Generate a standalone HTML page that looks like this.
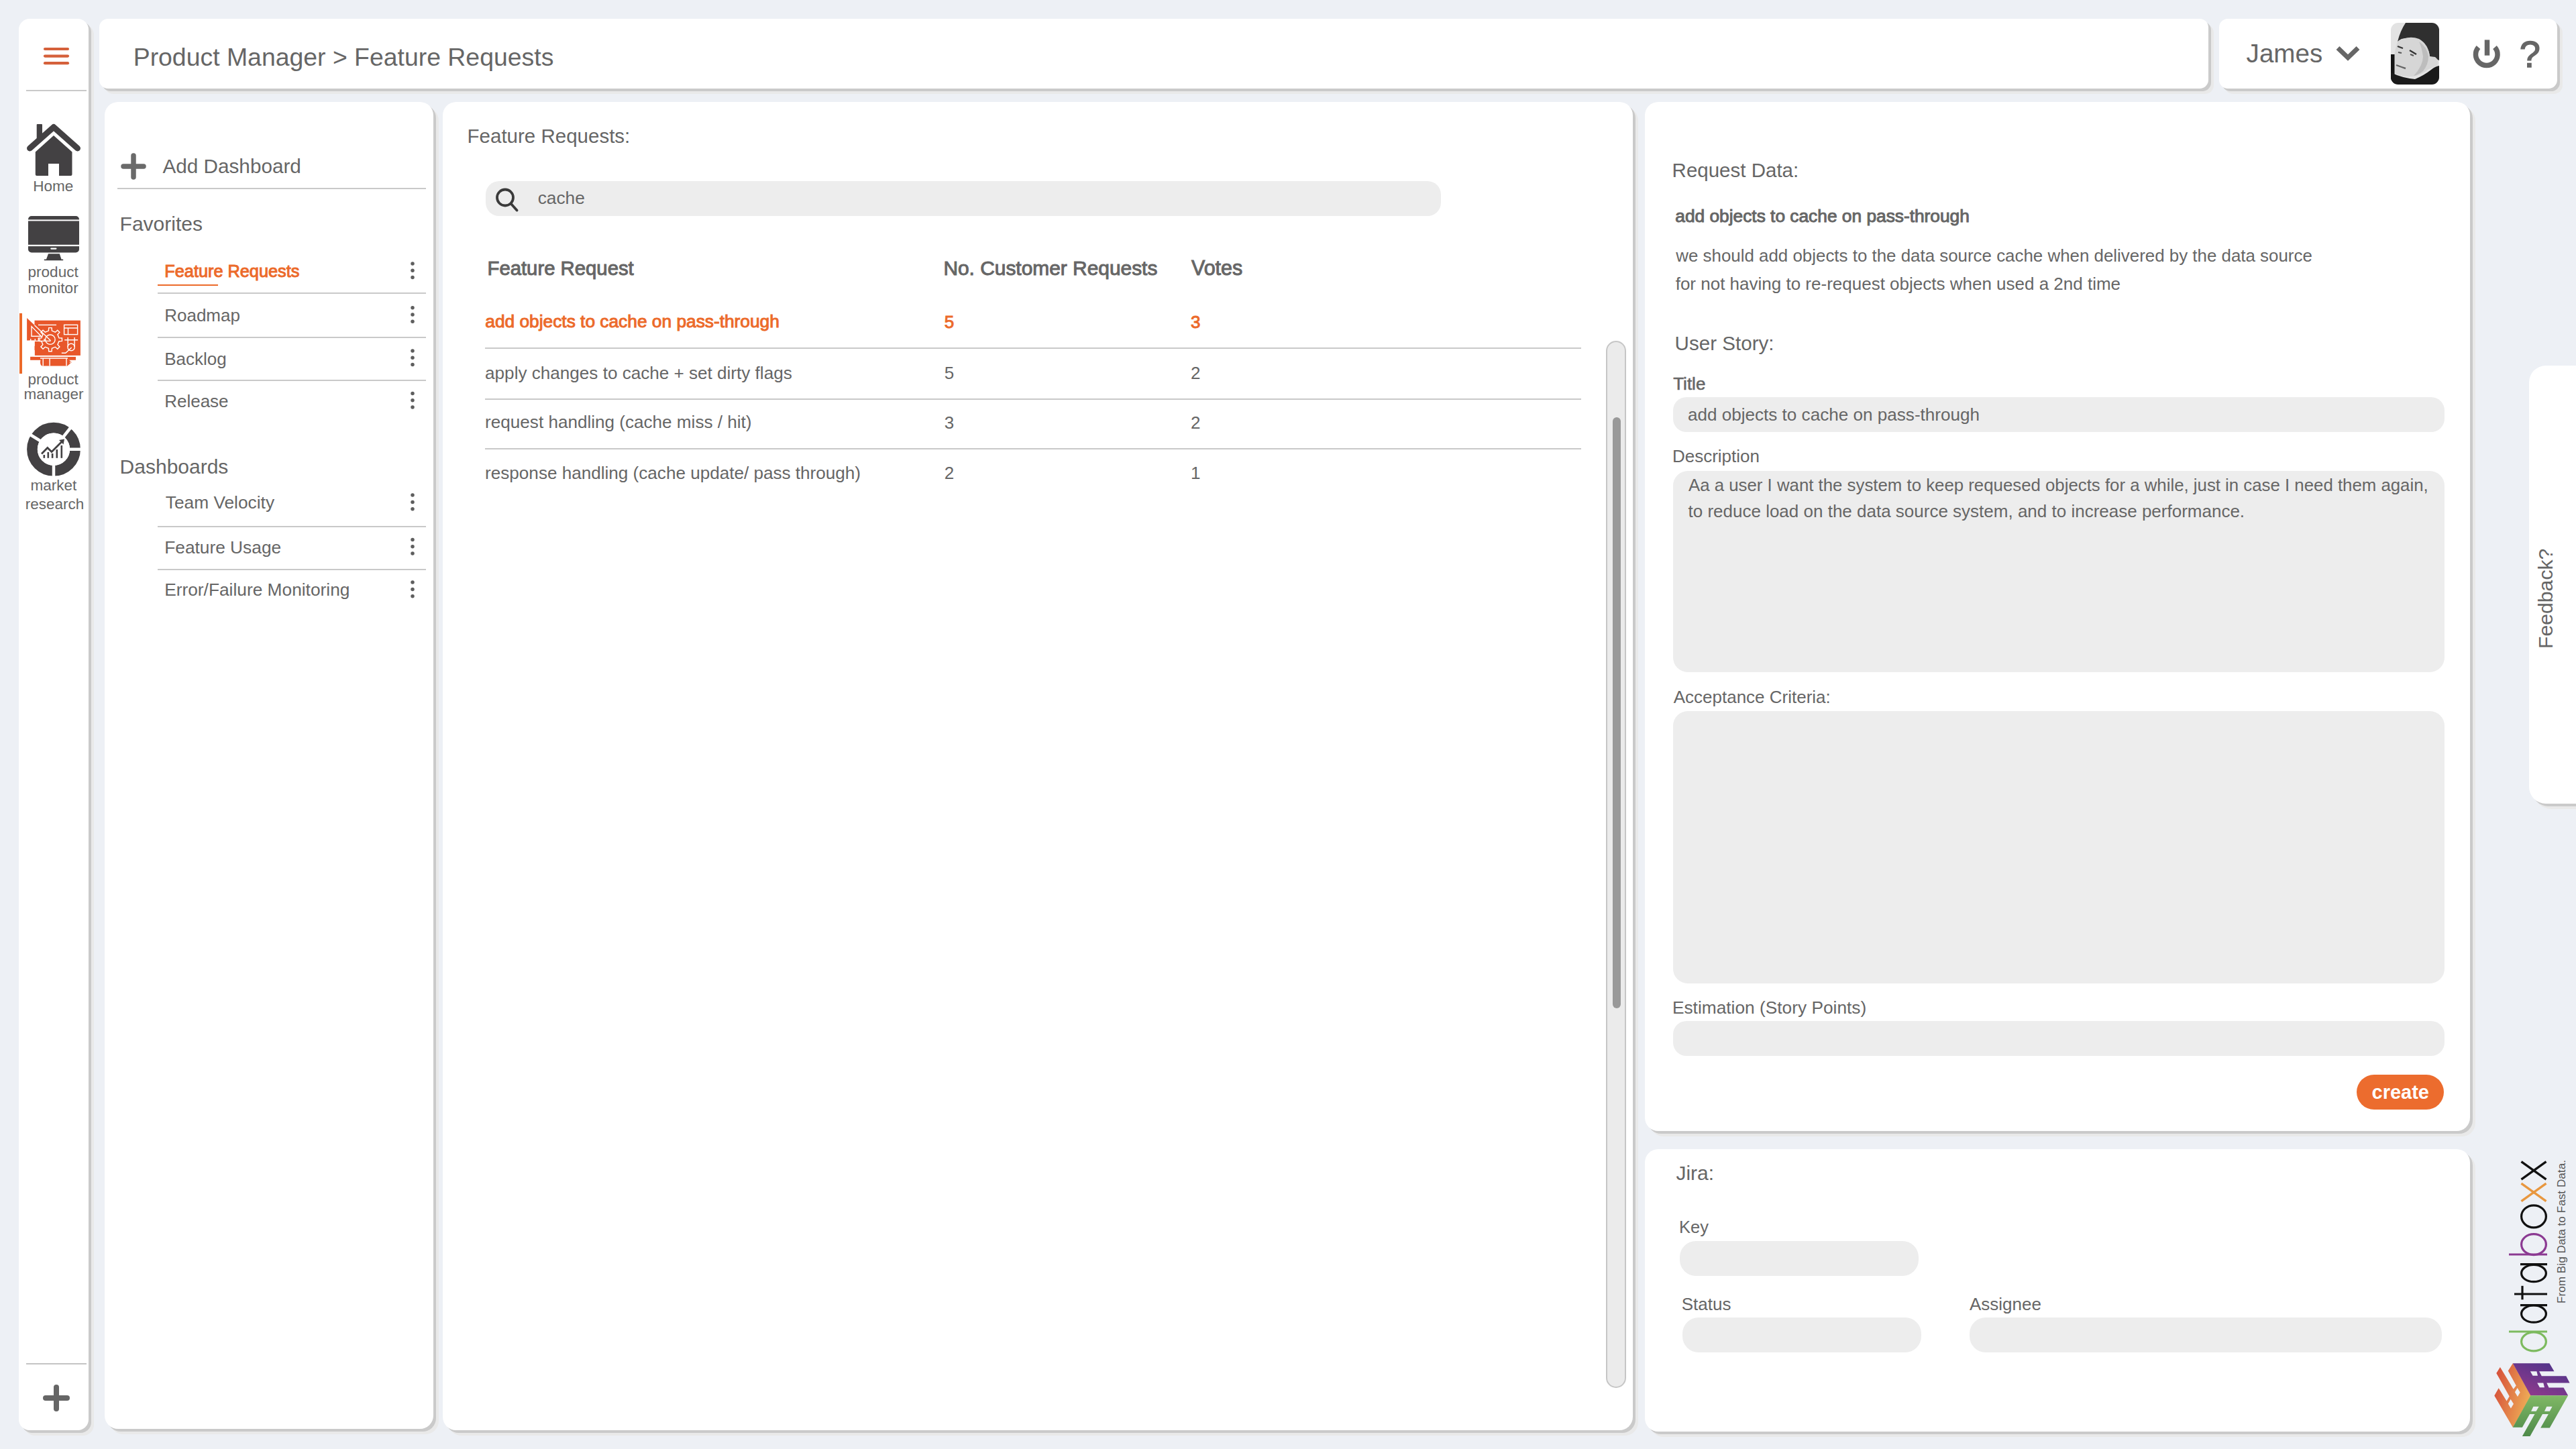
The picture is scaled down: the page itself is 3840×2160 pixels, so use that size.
<!DOCTYPE html>
<html><head><meta charset="utf-8"><style>
html,body{margin:0;padding:0;}
body{width:3840px;height:2160px;background:#edf0f5;position:relative;overflow:hidden;font-family:"Liberation Sans", sans-serif;}
.t{position:absolute;white-space:nowrap;line-height:1;font-family:"Liberation Sans", sans-serif;}
.r{position:absolute;}
svg{position:absolute;left:0;top:0;}
</style></head><body>
<div class="r" style="left:28px;top:28px;width:104px;height:2104px;background:#fff;border-radius:16px;box-shadow:4px 4px 0 #cacaca,8px 8px 0 #e9e9e9;"></div>
<div class="r" style="left:148px;top:28px;width:3144px;height:104px;background:#fff;border-radius:13px;box-shadow:4px 4px 0 #cacaca,8px 8px 0 #e9e9e9;"></div>
<div class="r" style="left:3308px;top:28px;width:504px;height:104px;background:#fff;border-radius:13px;box-shadow:4px 4px 0 #cacaca,8px 8px 0 #e9e9e9;"></div>
<div class="r" style="left:156px;top:152px;width:490px;height:1978px;background:#fff;border-radius:20px;box-shadow:4px 4px 0 #cacaca,8px 8px 0 #e9e9e9;"></div>
<div class="r" style="left:660px;top:152px;width:1774px;height:1980px;background:#fff;border-radius:20px;box-shadow:4px 4px 0 #cacaca,8px 8px 0 #e9e9e9;"></div>
<div class="r" style="left:2452px;top:152px;width:1230px;height:1534px;background:#fff;border-radius:20px;box-shadow:4px 4px 0 #cacaca,8px 8px 0 #e9e9e9;"></div>
<div class="r" style="left:2452px;top:1713px;width:1230px;height:421px;background:#fff;border-radius:20px;box-shadow:4px 4px 0 #cacaca,8px 8px 0 #e9e9e9;"></div>
<div class="r" style="left:3770px;top:545px;width:100px;height:653px;background:#fff;border-radius:25px;box-shadow:4px 4px 0 #cacaca,8px 8px 0 #e9e9e9;"></div>
<div class="r" style="left:39px;top:134px;width:90px;height:2px;background:#c9c9c9;border-radius:0px;"></div>
<div class="r" style="left:39px;top:2032px;width:90px;height:2px;background:#c4c4c4;border-radius:0px;"></div>
<div class="r" style="left:29px;top:467px;width:4px;height:90px;background:#ec6a2a;border-radius:0px;"></div>
<div class="t" style="left:49.2px;top:266.7px;font-size:22.5px;color:#666;">Home</div>
<div class="t" style="left:41.6px;top:394.7px;font-size:22.5px;color:#666;">product</div>
<div class="t" style="left:41.6px;top:418.8px;font-size:22.5px;color:#666;">monitor</div>
<div class="t" style="left:41.6px;top:554.7px;font-size:22.5px;color:#666;">product</div>
<div class="t" style="left:35.6px;top:576.7px;font-size:22.5px;color:#666;">manager</div>
<div class="t" style="left:45.6px;top:712.7px;font-size:22.5px;color:#666;">market</div>
<div class="t" style="left:37.8px;top:740.7px;font-size:22.5px;color:#666;">research</div>
<div class="t" style="left:198.7px;top:66.7px;font-size:37.4px;color:#666;">Product Manager &gt; Feature Requests</div>
<div class="t" style="left:3348.6px;top:60.5px;font-size:38.6px;color:#666;">James</div>
<div class="t" style="left:242.5px;top:233.3px;font-size:29.7px;color:#666;">Add Dashboard</div>
<div class="r" style="left:175px;top:280px;width:460px;height:2px;background:#c9c9c9;border-radius:0px;"></div>
<div class="t" style="left:178.6px;top:318.9px;font-size:30px;color:#666;">Favorites</div>
<div class="t" style="left:245.3px;top:391.9px;font-size:25.3px;color:#ec6a2a;-webkit-text-stroke:1.0px #ec6a2a;">Feature Requests</div>
<div class="r" style="left:235px;top:424px;width:90px;height:2px;background:#ec6a2a;border-radius:0px;"></div>
<div class="r" style="left:235px;top:436px;width:400px;height:2px;background:#c9c9c9;border-radius:0px;"></div>
<div class="r" style="left:235px;top:502px;width:400px;height:2px;background:#c9c9c9;border-radius:0px;"></div>
<div class="r" style="left:235px;top:566px;width:400px;height:2px;background:#c9c9c9;border-radius:0px;"></div>
<div class="t" style="left:245.2px;top:457.3px;font-size:26px;color:#666;">Roadmap</div>
<div class="t" style="left:245.2px;top:521.5px;font-size:26px;color:#666;">Backlog</div>
<div class="t" style="left:245.2px;top:585.0px;font-size:26px;color:#666;">Release</div>
<div class="t" style="left:178.6px;top:680.6px;font-size:30px;color:#666;">Dashboards</div>
<div class="t" style="left:246.8px;top:736.4px;font-size:26.3px;color:#666;">Team Velocity</div>
<div class="r" style="left:235px;top:784px;width:400px;height:2px;background:#c9c9c9;border-radius:0px;"></div>
<div class="t" style="left:245.2px;top:802.7px;font-size:26.3px;color:#666;">Feature Usage</div>
<div class="r" style="left:235px;top:848px;width:400px;height:2px;background:#c9c9c9;border-radius:0px;"></div>
<div class="t" style="left:245.2px;top:866.4px;font-size:26.3px;color:#666;">Error/Failure Monitoring</div>
<div class="t" style="left:696.6px;top:187.5px;font-size:29.5px;color:#666;">Feature Requests:</div>
<div class="r" style="left:724px;top:270px;width:1424px;height:52px;background:#ededed;border-radius:20px;"></div>
<div class="t" style="left:801.7px;top:282.2px;font-size:26.3px;color:#666;">cache</div>
<div class="t" style="left:726.5px;top:385.0px;font-size:29.3px;color:#666;-webkit-text-stroke:1.0px #666;">Feature Request</div>
<div class="t" style="left:1406.4px;top:384.5px;font-size:29.9px;color:#666;-webkit-text-stroke:1.0px #666;">No. Customer Requests</div>
<div class="t" style="left:1776.0px;top:384.0px;font-size:30.5px;color:#666;-webkit-text-stroke:1.0px #666;">Votes</div>
<div class="t" style="left:723.3px;top:466.2px;font-size:26.3px;color:#ec6a2a;-webkit-text-stroke:1.0px #ec6a2a;">add objects to cache on pass-through</div>
<div class="t" style="left:1407.8px;top:466.5px;font-size:26px;color:#ec6a2a;-webkit-text-stroke:1.0px #ec6a2a;">5</div>
<div class="t" style="left:1775.0px;top:466.5px;font-size:26px;color:#ec6a2a;-webkit-text-stroke:1.0px #ec6a2a;">3</div>
<div class="t" style="left:723.1px;top:542.5px;font-size:26.1px;color:#666;">apply changes to cache + set dirty flags</div>
<div class="t" style="left:1407.8px;top:542.6px;font-size:26px;color:#666;">5</div>
<div class="t" style="left:1775.0px;top:542.6px;font-size:26px;color:#666;">2</div>
<div class="t" style="left:723.1px;top:616.4px;font-size:26.1px;color:#666;">request handling (cache miss / hit)</div>
<div class="t" style="left:1407.8px;top:616.5px;font-size:26px;color:#666;">3</div>
<div class="t" style="left:1775.0px;top:616.5px;font-size:26px;color:#666;">2</div>
<div class="t" style="left:723.1px;top:691.9px;font-size:26.1px;color:#666;">response handling (cache update/ pass through)</div>
<div class="t" style="left:1407.8px;top:692.0px;font-size:26px;color:#666;">2</div>
<div class="t" style="left:1775.0px;top:692.0px;font-size:26px;color:#666;">1</div>
<div class="r" style="left:723px;top:518px;width:1634px;height:2px;background:#c9c9c9;border-radius:0px;"></div>
<div class="r" style="left:723px;top:594px;width:1634px;height:2px;background:#c9c9c9;border-radius:0px;"></div>
<div class="r" style="left:723px;top:668px;width:1634px;height:2px;background:#c9c9c9;border-radius:0px;"></div>
<div class="r" style="left:2394px;top:508px;width:30px;height:1561px;background:#ebebeb;border-radius:15px;border:2px solid #c6c6c6;box-sizing:border-box;"></div>
<div class="r" style="left:2404px;top:622px;width:12px;height:881px;background:#999999;border-radius:6px;"></div>
<div class="t" style="left:2492.6px;top:239.2px;font-size:29.5px;color:#666;">Request Data:</div>
<div class="t" style="left:2497.3px;top:309.0px;font-size:26.3px;color:#666;-webkit-text-stroke:1.0px #666;">add objects to cache on pass-through</div>
<div class="t" style="left:2498.3px;top:368.5px;font-size:25.9px;color:#666;">we should add objects to the data source cache when delivered by the data source</div>
<div class="t" style="left:2497.7px;top:410.4px;font-size:26px;color:#666;">for not having to re-request objects when used a 2nd time</div>
<div class="t" style="left:2496.6px;top:497.3px;font-size:29.6px;color:#666;">User Story:</div>
<div class="t" style="left:2494.2px;top:558.9px;font-size:26px;color:#666;-webkit-text-stroke:0.6px #666;">Title</div>
<div class="r" style="left:2494px;top:592px;width:1150px;height:52px;background:#ededed;border-radius:20px;"></div>
<div class="t" style="left:2515.9px;top:604.7px;font-size:26.1px;color:#666;">add objects to cache on pass-through</div>
<div class="t" style="left:2492.9px;top:667.0px;font-size:26px;color:#666;">Description</div>
<div class="r" style="left:2494px;top:702px;width:1150px;height:300px;background:#ededed;border-radius:22px;"></div>
<div class="t" style="left:2517.0px;top:710.5px;font-size:25.8px;color:#666;">Aa a user I want the system to keep requesed objects for a while, just in case I need them again,</div>
<div class="t" style="left:2516.5px;top:748.5px;font-size:26px;color:#666;">to reduce load on the data source system, and to increase performance.</div>
<div class="t" style="left:2494.7px;top:1025.5px;font-size:26px;color:#666;">Acceptance Criteria:</div>
<div class="r" style="left:2494px;top:1060px;width:1150px;height:406px;background:#ededed;border-radius:22px;"></div>
<div class="t" style="left:2492.9px;top:1488.5px;font-size:26.3px;color:#666;">Estimation (Story Points)</div>
<div class="r" style="left:2494px;top:1522px;width:1150px;height:52px;background:#ededed;border-radius:20px;"></div>
<div class="r" style="left:3513px;top:1602px;width:130px;height:52px;background:#ec6c2e;border-radius:26px;"></div>
<div class="t" style="left:3535.5px;top:1613.7px;font-size:29px;color:#ffffff;font-weight:700;">create</div>
<div class="t" style="left:2498.4px;top:1734.0px;font-size:30px;color:#666;">Jira:</div>
<div class="t" style="left:2503.0px;top:1817.4px;font-size:25.5px;color:#666;">Key</div>
<div class="r" style="left:2504px;top:1850px;width:356px;height:52px;background:#ededed;border-radius:24px;"></div>
<div class="t" style="left:2506.7px;top:1931.0px;font-size:26px;color:#666;">Status</div>
<div class="r" style="left:2508px;top:1964px;width:356px;height:52px;background:#ededed;border-radius:24px;"></div>
<div class="t" style="left:2936.0px;top:1931.0px;font-size:26px;color:#666;">Assignee</div>
<div class="r" style="left:2936px;top:1964px;width:704px;height:52px;background:#ededed;border-radius:24px;"></div>
<div class="t" style="left:3755.8px;top:53.2px;font-size:56px;color:#666;-webkit-text-stroke:1.4px #666;">?</div>
<div class="t" style="left:3824.5px;top:1943px;font-size:17.2px;line-height:17.2px;color:#555;transform-origin:0 0;transform:rotate(-90deg) translateY(-14.6px);">From Big Data to Fast Data.</div>
<div class="t" style="left:3780px;top:966.6px;font-size:30.2px;line-height:30.2px;color:#666;transform-origin:0 0;transform:rotate(-90deg);">Feedback?</div>
<svg width="3840" height="2160" viewBox="0 0 3840 2160">
<defs>
<linearGradient id="gOr" x1="0" y1="0.3" x2="1" y2="0.7"><stop offset="0" stop-color="#d6503a"/><stop offset="1" stop-color="#f0b458"/></linearGradient>
<linearGradient id="gPu" x1="0.3" y1="1" x2="1" y2="0"><stop offset="0" stop-color="#8f3a8c"/><stop offset="1" stop-color="#47338a"/></linearGradient>
<linearGradient id="gGr" x1="0" y1="0" x2="0" y2="1"><stop offset="0" stop-color="#80b865"/><stop offset="1" stop-color="#4e8a4a"/></linearGradient>
<clipPath id="photoClip"><rect x="3564" y="34" width="72" height="92" rx="11"/></clipPath>
</defs>
<!-- hamburger -->
<g stroke="#d5603a" stroke-width="4.2" stroke-linecap="round">
<line x1="67" y1="73" x2="101" y2="73"/><line x1="67" y1="83.6" x2="101" y2="83.6"/><line x1="67" y1="94.2" x2="101" y2="94.2"/>
</g>
<!-- home -->
<g fill="#434143">
<path d="M44.5,221 L80,189.5 L115.5,221" fill="none" stroke="#434143" stroke-width="9" stroke-linecap="round" stroke-linejoin="round"/>
<rect x="54.7" y="185" width="8.3" height="22" rx="1"/>
<path d="M80,202 L107.5,226.5 L107.5,260 Q107.5,262 105.5,262 L88,262 L88,244 L72,244 L72,262 L54.8,262 Q52.8,262 52.8,260 L52.8,226.5 Z"/>
</g>
<!-- monitor -->
<g fill="#434143">
<rect x="42" y="322" width="76" height="54.5" rx="5"/>
<path d="M72,378.3 L88.8,378.3 L91.5,386.4 L94,386.4 Q95,388.3 93.5,388.3 L66.5,388.3 Q65,388.3 66,386.4 L69,386.4 Z"/>
</g>
<g fill="#fff">
<rect x="42" y="327.4" width="76" height="2"/>
<rect x="42" y="364.8" width="76" height="2.3"/>
<rect x="75.2" y="369.5" width="9.3" height="2.2" rx="1.1"/>
</g>
<!-- product manager icon -->
<g fill="#e8572a">
<rect x="51.5" y="477.7" width="68.4" height="52.2"/>
<rect x="45.1" y="531.8" width="67.9" height="5"/>
<path d="M40.1,474.1 L40.1,507.5 L75.5,507.5 Z"/>
<path d="M64,534.6 L100.5,534.6 L106.7,540.1 L100.5,545.6 L64,545.6 Q60,545.6 60,540.1 Q60,534.6 64,534.6 Z"/>
</g>
<g fill="none" stroke="#fff" stroke-width="1.4">
<path d="M72.41,493.14 L72.68,488.64 L77.12,488.64 L77.39,493.14 L82.38,495.20 L85.75,492.21 L88.89,495.35 L85.90,498.72 L87.96,503.71 L92.46,503.98 L92.46,508.42 L87.96,508.69 L85.90,513.68 L88.89,517.05 L85.75,520.19 L82.38,517.20 L77.39,519.26 L77.12,523.76 L72.68,523.76 L72.41,519.26 L67.42,517.20 L64.05,520.19 L60.91,517.05 L63.90,513.68 L61.84,508.69 L57.34,508.42 L57.34,503.98 L61.84,503.71 L63.90,498.72 L60.91,495.35 L64.05,492.21 L67.42,495.20 Z" fill="#e8572a"/>
<circle cx="74.9" cy="506.2" r="7.2"/>
<path d="M51.5,484.8 L75.5,507.8"/>
<path d="M47,486.6 L47,501.2 L61.4,501.2 Z"/>
<path d="M43,508.4 L75.5,508.4 M45.7,505 L45.7,508.4 M52.3,505 L52.3,508.4 M59.2,505 L59.2,508.4 M66.1,505 L66.1,508.4"/>
<path d="M51,509 L51,515.8 M51,522 L51,530.8 L120,530.8"/>
<path d="M57,484.4 L84,484.4"/>
<rect x="95.6" y="484.3" width="20" height="14.3"/>
<path d="M95.6,489 L115.6,489 M101.5,489 L101.5,498.6"/>
<path d="M96.2,506.7 L116.1,506.7 M101.2,503.1 L101.2,517 M111.1,503.1 L111.1,517"/>
<circle cx="106.1" cy="517.5" r="5.2"/>
<path d="M91.8,526.3 L97.8,526.3 L106.7,518"/>
<path d="M64.2,534.6 L64.2,545.6 M74.1,534.6 L74.1,545.6 M99,534.6 L99,545.6"/>
<path d="M60,534 L101,534"/>
</g>
<path d="M104,539 L106.2,540.1 L104,541.2 Z" fill="#fff"/>
<!-- donut -->
<g>
<circle cx="80" cy="669.7" r="32" fill="none" stroke="#434143" stroke-width="15.8"/>
<g stroke="#fff" stroke-width="4.5">
<line x1="80" y1="669.7" x2="80" y2="715"/>
<line x1="80" y1="669.7" x2="125" y2="669.7"/>
<line x1="80" y1="669.7" x2="108" y2="634"/>
<line x1="80" y1="669.7" x2="42" y2="646"/>
</g>
<circle cx="80" cy="669.7" r="24.2" fill="#fff"/>
<path d="M62,676.5 L70.8,667.5 L77,673.5 L93.5,657" fill="none" stroke="#434143" stroke-width="2.8"/>
<path d="M96,654.5 L88,656 L94.5,662.5 Z" fill="#434143"/>
<g fill="#434143">
<rect x="64.5" y="678" width="2.6" height="4.8"/><rect x="70.5" y="674" width="2.6" height="8.8"/><rect x="76.8" y="676" width="2.6" height="6.8"/><rect x="83.5" y="670" width="2.6" height="12.8"/><rect x="90.5" y="664" width="2.6" height="18.8"/>
</g>
</g>
<!-- bottom plus -->
<g stroke="#666" stroke-width="8" stroke-linecap="round">
<line x1="84" y1="2068" x2="84" y2="2100"/><line x1="68" y1="2084" x2="100" y2="2084"/>
</g>
<!-- add dashboard plus -->
<g stroke="#6a6a6a" stroke-width="7.5" stroke-linecap="round">
<line x1="199" y1="232" x2="199" y2="264"/><line x1="184" y1="248" x2="214" y2="248"/>
</g>
<!-- kebabs -->
<g fill="#5e5e5e">
<circle cx="615" cy="392.9" r="2.75"/>
<circle cx="615" cy="403.2" r="2.75"/>
<circle cx="615" cy="413.5" r="2.75"/>
<circle cx="615" cy="458.7" r="2.75"/>
<circle cx="615" cy="469.0" r="2.75"/>
<circle cx="615" cy="479.3" r="2.75"/>
<circle cx="615" cy="522.9" r="2.75"/>
<circle cx="615" cy="533.2" r="2.75"/>
<circle cx="615" cy="543.5" r="2.75"/>
<circle cx="615" cy="586.4" r="2.75"/>
<circle cx="615" cy="596.7" r="2.75"/>
<circle cx="615" cy="607.0" r="2.75"/>
<circle cx="615" cy="738.1" r="2.75"/>
<circle cx="615" cy="748.4" r="2.75"/>
<circle cx="615" cy="758.7" r="2.75"/>
<circle cx="615" cy="804.4" r="2.75"/>
<circle cx="615" cy="814.7" r="2.75"/>
<circle cx="615" cy="825.0" r="2.75"/>
<circle cx="615" cy="868.1" r="2.75"/>
<circle cx="615" cy="878.4" r="2.75"/>
<circle cx="615" cy="888.7" r="2.75"/>
</g>
<!-- search icon -->
<g fill="none" stroke="#3a3a3a" stroke-width="3.8" stroke-linecap="round">
<circle cx="753" cy="294.5" r="12"/>
<line x1="762" y1="304" x2="770.5" y2="313.5"/>
</g>
<!-- chevron -->
<path d="M3485,71.5 L3500,86 L3515,71.5" fill="none" stroke="#666" stroke-width="7"/>
<!-- power -->
<g fill="none" stroke="#666" stroke-width="7.5">
<path d="M3694.5,70.5 A16.3,16.3 0 1 0 3719,70.5"/>
<line x1="3707.5" y1="59.4" x2="3707.5" y2="82.7"/>
</g>
<!-- photo -->
<g clip-path="url(#photoClip)">
<rect x="3564" y="34" width="72" height="92" fill="#e3e3e3"/>
<path d="M3586,34 L3636,34 L3636,90 Q3628,86 3622,84 Q3620,68 3608,60 Q3594,54 3580,58 Q3576,60 3574,62 Q3578,46 3586,34 Z" fill="#2f2f2f"/>
<path d="M3574,62 Q3590,52 3606,58 Q3620,66 3622,84 L3630,85 Q3637,90 3633,98 Q3626,101 3620,103 Q3610,112 3596,114 Q3580,115 3569,109 Q3566,86 3574,62 Z" fill="#d6d6d6"/>
<path d="M3606,62 Q3618,70 3620,84 Q3620,96 3612,106 Q3604,112 3598,113 Q3612,98 3612,84 Q3610,70 3606,62 Z" fill="#bdbdbd"/>
<path d="M3574,69 L3582,72 M3592,75 L3602,81" stroke="#333" stroke-width="2.4"/>
<path d="M3575,78 L3580,79 M3593,81 L3598,83" stroke="#555" stroke-width="2"/>
<path d="M3572,97 Q3580,100 3586,102" stroke="#666" stroke-width="2.4" fill="none"/>
<rect x="3564" y="81" width="5.5" height="45" fill="#141414"/>
<path d="M3564,108 Q3580,116 3600,118 Q3614,112 3624,104 Q3630,99 3636,98 L3636,126 L3564,126 Z" fill="#1a1a1a"/>
</g>
<!-- feedback tab already html -->
<!-- logo cube -->
<path d="M3745.9,2032.3 L3738.8,2043.5 L3750.8,2065.5 L3746.7,2070.7 L3726.9,2037.9 L3721.3,2046.9 L3740.7,2081.6 L3736.6,2088.6 L3724.7,2069.3 L3718.3,2080.4 L3745.9,2127.8 L3772.8,2080.4 Z" fill="url(#gOr)"/>
<path d="M3745.8,2032.2 L3800.4,2032.2 L3807.5,2044.2 L3785.1,2044.2 L3788.8,2051.2 L3825.3,2051.2 L3830.6,2061.6 L3796.3,2061.6 L3799.6,2068.6 L3821.5,2068.6 L3828.2,2080.2 L3772.3,2080.2 Z" fill="url(#gPu)"/>
<path d="M3772.3,2080.2 L3828.2,2080.2 L3800.8,2128.6 L3787.2,2128.6 L3798.9,2108.0 L3790.1,2108.0 L3771.5,2141.1 L3759.9,2141.1 L3778.5,2108.0 L3771.0,2108.0 L3759.9,2127.8 L3745.8,2127.8 Z" fill="url(#gGr)"/>
<g fill="#edf0f5"><path d="M3752.6,2068.9 L3756.7,2075.6 L3753.0,2081.9 L3748.9,2075.2 Z"/><path d="M3742.6,2085.7 L3747.0,2092.7 L3742.9,2099.5 L3738.8,2092.4 Z"/><path d="M3771.9,2044.2 L3781.4,2044.2 L3783.0,2050.8 L3775.6,2050.8 Z"/><path d="M3782.2,2061.6 L3791.3,2061.6 L3793.0,2068.2 L3785.9,2068.2 Z"/><path d="M3776.4,2096.8 L3784.7,2096.8 L3780.6,2103.8 L3773.1,2103.8 Z"/><path d="M3796.3,2096.8 L3804.6,2096.8 L3800.8,2103.8 L3793.0,2103.8 Z"/></g>
<!-- logo text databoxx (rotated) -->
<g fill="none" stroke-width="3.2">
<ellipse cx="3777.0" cy="1999.9" rx="18.4" ry="14.0" stroke="#7dba5f"/>
<path d="M3797.0,1985.0 L3740.0,1985.0" stroke="#7dba5f" stroke-width="3.2"/>
<ellipse cx="3777.0" cy="1958.6" rx="18.4" ry="12.6" stroke="#111111"/>
<path d="M3797.0,1945.6 L3757.0,1945.6" stroke="#111111" stroke-width="3.2"/>
<path d="M3797.0,1929.0 L3748.0,1929.0" stroke="#111111" stroke-width="3.2"/>
<path d="M3760.0,1937.3 L3760.0,1916.8" stroke="#111111" stroke-width="3.2"/>
<ellipse cx="3777.0" cy="1898.1" rx="18.4" ry="12.6" stroke="#111111"/>
<path d="M3797.0,1884.6 L3757.0,1884.6" stroke="#111111" stroke-width="3.2"/>
<ellipse cx="3777.0" cy="1855.1" rx="18.4" ry="15.5" stroke="#8b3a92"/>
<path d="M3797.0,1870.0 L3740.0,1870.0" stroke="#8b3a92" stroke-width="3.2"/>
<ellipse cx="3777.0" cy="1813.3" rx="18.4" ry="16.5" stroke="#111111"/>
<path d="M3795.5,1790.6 L3758.5,1764.1" stroke="#e8973f" stroke-width="3.4"/>
<path d="M3758.5,1790.6 L3795.5,1764.1" stroke="#e8973f" stroke-width="3.4"/>
<path d="M3795.5,1758.1 L3758.5,1731.6" stroke="#111111" stroke-width="3.4"/>
<path d="M3758.5,1758.1 L3795.5,1731.6" stroke="#111111" stroke-width="3.4"/>
</g>
</svg>

</body></html>
